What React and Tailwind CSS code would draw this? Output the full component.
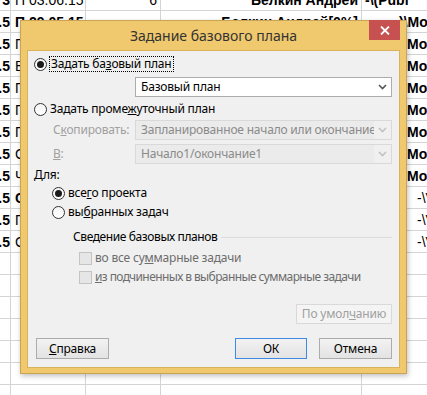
const rows = [
  { a: '3', b: 'П 03.06.15', bBold: false, c: '6', d: 'Белкин Андрей', e: '-\\(Publ', eBold: true, ePad: 'pl-[3px]' },
  { a: '.5', b: 'П 29.05.15', bBold: true, c: '', d: 'Белкин Андрей[0%]', e: ')\\Mobile', eBold: true, ePad: 'pl-[37px]' },
  { a: '.5', b: 'П', bBold: false, e: 'Mobile', eBold: true, ePad: 'pl-[45px]' },
  { a: '.5', b: 'В', bBold: false, e: 'Mobile', eBold: true, ePad: 'pl-[45px]' },
  { a: '.5', b: 'П', bBold: false, e: 'Mobile', eBold: true, ePad: 'pl-[45px]' },
  { a: '.5', b: 'П', bBold: false, e: 'Mobile', eBold: true, ePad: 'pl-[45px]' },
  { a: '.5', b: 'П', bBold: false, e: 'Mobile', eBold: true, ePad: 'pl-[45px]' },
  { a: '.5', b: 'С', bBold: false, e: 'Mobile', eBold: true, ePad: 'pl-[45px]' },
  { a: '.5', b: 'Ч', bBold: false, e: 'Mobile', eBold: true, ePad: 'pl-[45px]' },
  { a: '.5', b: 'С', bBold: true, e: '-\\V', eBold: false, ePad: 'pl-[55px]' },
  { a: '.5', b: 'П', bBold: false, e: '-\\V', eBold: false, ePad: 'pl-[55px]' },
  { a: '.5', b: 'С', bBold: false, e: '-\\V', eBold: false, ePad: 'pl-[55px]' },
  {}, {}, {}, {}, {}, {}, {},
];

const Chevron = ({ color = '#505050' }) => (
  <svg width="9" height="6" viewBox="0 0 9 6">
    <polyline points="1,1 4.5,4.5 8,1" fill="none" stroke={color} strokeWidth="1.6" />
  </svg>
);

const Radio = ({ checked }) => (
  <span className="flex items-center justify-center w-[13px] h-[13px] rounded-full border border-[#333] bg-gradient-to-b from-[#f4f4f4] to-[#ffffff] shrink-0">
    {checked && <span className="w-[7px] h-[7px] rounded-full bg-[#1a1a1a]" />}
  </span>
);

const Checkbox = () => (
  <span className="w-[13px] h-[13px] border border-[#c4c4c4] bg-[#e6e6e6] shrink-0" />
);

const Combo = ({ value, disabled }) => (
  <div
    className={
      disabled
        ? 'flex items-center h-[20px] w-[257px] border border-[#d9d9d9] bg-[#ebebeb]'
        : 'flex items-center h-[20px] w-[257px] border border-[#acacac] bg-white'
    }
  >
    <span
      className={
        disabled
          ? 'flex-1 pl-[5px] whitespace-nowrap overflow-hidden text-[#8a8a8a]'
          : 'flex-1 pl-[5px] whitespace-nowrap overflow-hidden text-black'
      }
    >
      {value}
    </span>
    <span
      className={
        disabled
          ? 'flex items-center justify-center w-[17px] h-full shrink-0 bg-[#f0f0f0]'
          : 'flex items-center justify-center w-[17px] h-full shrink-0'
      }
    >
      <Chevron color={disabled ? '#c2c2c2' : '#555'} />
    </span>
  </div>
);

const Button = ({ children, className = '' }) => (
  <div
    className={`flex items-center justify-center h-[21px] border bg-gradient-to-b from-[#f2f2f2] to-[#e3e3e3] ${className}`}
  >
    {children}
  </div>
);

export default function App() {
  return (
    <div className="relative w-[427px] h-[395px] overflow-hidden bg-white font-['Liberation_Sans',sans-serif] text-[14px] text-black">
      <div className="mt-[-11px]">
        {rows.map((r, i) => (
          <div key={i} className="grid grid-cols-[11px_75px_75px_201px_1fr] h-[22px] leading-none">
            <div className="flex items-center justify-end overflow-hidden whitespace-nowrap border-r border-b border-[#d4d4d4] font-bold">
              {r.a}
            </div>
            <div
              className={`flex items-center overflow-hidden whitespace-nowrap pl-[4px] border-r border-b border-[#d4d4d4] ${r.bBold ? 'font-bold' : ''}`}
            >
              {r.b}
            </div>
            <div className="flex items-center justify-end overflow-hidden whitespace-nowrap pr-[3px] border-r border-b border-[#d4d4d4]">
              {r.c}
            </div>
            <div className="flex items-center justify-end overflow-hidden whitespace-nowrap pr-[3px] border-r border-b border-[#d4d4d4] font-bold">
              {r.d}
            </div>
            <div
              className={`flex items-center overflow-hidden whitespace-nowrap border-b border-[#d4d4d4] ${r.ePad || ''} ${r.eBold ? 'font-bold' : ''}`}
            >
              {r.e}
            </div>
          </div>
        ))}
      </div>

      {/* dialog window */}
      <div className="absolute left-[20px] top-[20px] w-[387px] h-[354px] flex flex-col bg-[#f0c86d] border border-[#c9a452] shadow-[1px_2px_5px_rgba(0,0,0,0.25)] font-['Noto_Sans',sans-serif] text-[12px] tracking-[-0.2px]">
        <div className="relative flex items-center justify-center h-[29px] shrink-0">
          <span className="text-[14px] tracking-normal text-[#333]">Задание базового плана</span>
          <div className="absolute right-[6px] top-[-1px] w-[31px] h-[20px] bg-[#c75050] flex items-center justify-center">
            <svg width="10" height="9" viewBox="0 0 10 9">
              <path d="M1 0.5 L9 8.5 M9 0.5 L1 8.5" stroke="white" strokeWidth="1.8" />
            </svg>
          </div>
        </div>

        <div className="mx-[6px] h-[318px] border border-[#d9b35a] bg-[#f0f0f0] flex flex-col pl-[6px] pr-[7px] pt-[6px] leading-none">
          <div className="flex items-center h-[14px]">
            <Radio checked />
            <span className="ml-[2px] px-[1px] py-[1px] border border-dotted border-black">
              Задать ба<span className="underline">з</span>овый план
            </span>
          </div>

          <div className="flex justify-end mt-[6px]">
            <Combo value="Базовый план" />
          </div>

          <div className="flex items-center h-[14px] mt-[5px]">
            <Radio />
            <span className="ml-[3px]">
              Задать проме<span className="underline">ж</span>уточный план
            </span>
          </div>

          <div className="flex items-center justify-between mt-[4px]">
            <span className="ml-[19px] text-[#a0a0a0]">
              С<span className="underline">к</span>опировать:
            </span>
            <Combo value="Запланированное начало или окончание" disabled />
          </div>

          <div className="flex items-center justify-between mt-[4px]">
            <span className="ml-[19px] text-[#a0a0a0]">
              <span className="underline">В</span>:
            </span>
            <Combo value="Начало1/окончание1" disabled />
          </div>

          <div className="flex items-center h-[14px] mt-[4px]">Для:</div>

          <div className="flex items-center h-[14px] mt-[4px] ml-[18px]">
            <Radio checked />
            <span className="ml-[3px]">
              все<span className="underline">г</span>о проекта
            </span>
          </div>

          <div className="flex items-center h-[14px] mt-[5px] ml-[18px]">
            <Radio />
            <span className="ml-[3px]">
              вы<span className="underline">б</span>ранных задач
            </span>
          </div>

          <div className="flex items-center h-[14px] mt-[11px] ml-[39px]">
            <span className="tracking-[-0.4px]">Сведение базовых планов</span>
            <span className="flex-1 ml-[4px] border-t border-[#dcdcdc]" />
          </div>

          <div className="flex items-center h-[14px] mt-[7px] ml-[45px]">
            <Checkbox />
            <span className="ml-[3px] text-[#6d6d6d]">
              во все су<span className="underline">м</span>марные задачи
            </span>
          </div>

          <div className="flex items-center h-[14px] mt-[5px] ml-[45px]">
            <Checkbox />
            <span className="ml-[3px] text-[#6d6d6d] tracking-[-0.6px]">
              <span className="underline">и</span>з подчиненных в выбранные суммарные задачи
            </span>
          </div>

          <div className="flex justify-end mt-[20px]">
            <div className="flex items-center justify-center w-[96px] h-[20px] border border-[#d9d9d9] bg-[#f4f4f4] text-[#a0a0a0]">
              По умол<span className="underline">ч</span>анию
            </div>
          </div>

          <div className="flex items-center mt-[14px] pl-[2px]">
            <Button className="w-[73px] border-[#acacac]">
              <span className="underline">С</span>правка
            </Button>
            <div className="flex-1" />
            <Button className="w-[72px] border-[#3c8ce6]">ОК</Button>
            <Button className="w-[73px] ml-[12px] border-[#acacac]">Отмена</Button>
          </div>
        </div>
      </div>
    </div>
  );
}
